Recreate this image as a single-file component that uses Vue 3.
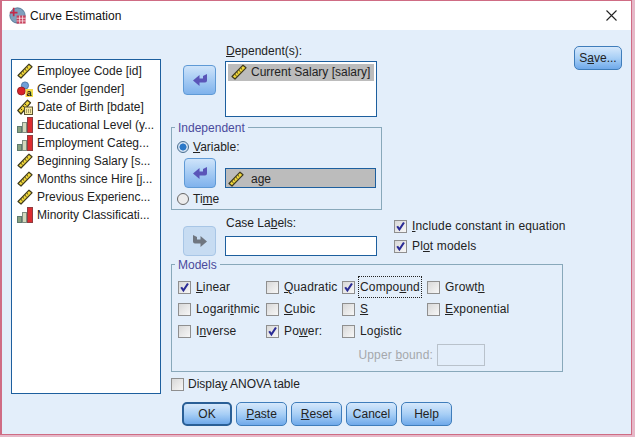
<script setup>
const variables = [
  { icon: 'ruler', label: 'Employee Code [id]' },
  { icon: 'nominal', label: 'Gender [gender]' },
  { icon: 'date', label: 'Date of Birth [bdate]' },
  { icon: 'bars', label: 'Educational Level (y...' },
  { icon: 'bars', label: 'Employment Categ...' },
  { icon: 'ruler', label: 'Beginning Salary [s...' },
  { icon: 'ruler', label: 'Months since Hire [j...' },
  { icon: 'ruler', label: 'Previous Experienc...' },
  { icon: 'bars', label: 'Minority Classificati...' }
]
const models = [
  { pre: '', u: 'L', post: 'inear', on: true },
  { pre: '', u: 'Q', post: 'uadratic', on: false },
  { pre: 'Compo', u: 'u', post: 'nd', on: true, focus: true },
  { pre: 'Growt', u: 'h', post: '', on: false },
  { pre: 'Logari', u: 't', post: 'hmic', on: false },
  { pre: '', u: 'C', post: 'ubic', on: false },
  { pre: '', u: 'S', post: '', on: false },
  { pre: '', u: 'E', post: 'xponential', on: false },
  { pre: 'I', u: 'n', post: 'verse', on: false },
  { pre: 'Po', u: 'w', post: 'er:', on: true },
  { pre: 'Lo', u: 'g', post: 'istic', on: false }
]
</script>

<template>
  <div class="window">
    <svg class="defs" width="0" height="0" aria-hidden="true">
      <defs>
        <symbol id="ruler" viewBox="0 0 16 16">
          <path d="M1 12.5 12 1.2l3 2.6L4 15z" fill="#f2d83a" stroke="#3f3a1c" stroke-width="1.2" stroke-linejoin="round" />
          <path d="M4 10.5l1.6 1.5M6 8.5l1.2 1.1M8 6.4l1.6 1.5M10 4.4l1.2 1.1" stroke="#3f3a1c" stroke-width="1" fill="none" />
        </symbol>
        <symbol id="date" viewBox="0 0 16 16">
          <path d="M0.8 11.5 10.5 1.2l3 2.6L4 15z" fill="#f2d83a" stroke="#3f3a1c" stroke-width="1.2" stroke-linejoin="round" />
          <path d="M3.6 9.6l1.5 1.4M6 7l1.2 1.1M8 5l1.5 1.4" stroke="#3f3a1c" stroke-width="1" fill="none" />
          <rect x="7.5" y="8" width="8" height="7.5" fill="#f4e7a0" stroke="#5a5330" stroke-width="1" />
          <path d="M9 11h1M11 11h1M13 11h1M9 13h1M11 13h1M13 13h1" stroke="#5a5330" stroke-width="1" />
        </symbol>
        <symbol id="bars" viewBox="0 0 16 16">
          <rect x="0.5" y="9.5" width="4" height="6" fill="#86a07e" stroke="#5f7a70" stroke-width="1" />
          <rect x="5.5" y="5.5" width="4" height="10" fill="#d3d8bc" stroke="#7f8c80" stroke-width="1" />
          <rect x="10.5" y="0.5" width="5" height="15" fill="#dc2c30" stroke="#8f3c40" stroke-width="1" />
        </symbol>
        <symbol id="arrow-left" viewBox="0 0 16 14">
          <path d="M15 1v6.5q0 2-2 2H7.5V13L1 7.5 7.5 2v3.5h3.5V3z" />
        </symbol>
        <symbol id="arrow-right" viewBox="0 0 16 14">
          <path d="M1 1v6.5q0 2 2 2h5.5V13L15 7.5 8.5 2v3.5H5V3z" />
        </symbol>
      </defs>
    </svg>

    <header class="titlebar">
      <svg class="app-icon" width="17" height="17" viewBox="0 0 20 20">
        <circle cx="10" cy="10" r="9" fill="#7fa0bd" stroke="#4e7392" />
        <path d="M1 6.5h9M5.5 1v10" stroke="#c42a4a" stroke-width="2" />
        <rect x="9" y="10" width="10.5" height="9.5" fill="#c8415c" />
        <path d="M9 13.2h10.5M9 16.4h10.5M12.5 10v9.5M16 10v9.5" stroke="#fff" stroke-width="0.8" />
      </svg>
      <span class="title">Curve Estimation</span>
      <svg class="close" width="11" height="11" viewBox="0 0 11 11">
        <path d="M.5.5l10 10M10.5.5l-10 10" stroke="#222" stroke-width="1.1" fill="none" />
      </svg>
    </header>

    <div class="body">
      <ul class="var-list">
        <li v-for="v in variables" :key="v.label" class="var-item">
          <svg v-if="v.icon !== 'nominal'" class="var-icon" width="16" height="16"><use :href="'#' + v.icon" /></svg>
          <svg v-else class="var-icon" width="16" height="16" viewBox="0 0 16 16">
            <circle cx="8" cy="4.5" r="3.6" fill="#6f9fd8" stroke="#3e6a9a" stroke-width="0.8" />
            <circle cx="4.4" cy="10" r="4" fill="#d8232a" stroke="#8a1a20" stroke-width="0.8" />
            <rect x="8.5" y="8" width="7.5" height="8" fill="#f5d94a" />
            <text x="9.6" y="15" class="nominal-a">a</text>
          </svg>
          <span>{{ v.label }}</span>
        </li>
      </ul>

      <div class="main">
        <section class="dep-row">
          <button class="arrow"><svg width="16" height="14"><use href="#arrow-left" /></svg></button>
          <div class="dep-field">
            <label class="field-label"><u>D</u>ependent(s):</label>
            <div class="listbox">
              <div class="selected">
                <svg width="16" height="16"><use href="#ruler" /></svg>
                <span>Current Salary [salary]</span>
              </div>
            </div>
          </div>
          <button class="btn save">S<u>a</u>ve...</button>
        </section>

        <fieldset class="group independent">
          <legend>Independent</legend>
          <div class="radio-row first">
            <span class="radio on"></span>
            <span><u>V</u>ariable:</span>
          </div>
          <div class="ind-row">
            <button class="arrow"><svg width="16" height="14"><use href="#arrow-left" /></svg></button>
            <div class="single">
              <svg width="16" height="16"><use href="#ruler" /></svg>
              <span>age</span>
            </div>
          </div>
          <div class="radio-row time">
            <span class="radio"></span>
            <span>Ti<u>m</u>e</span>
          </div>
        </fieldset>

        <section class="case-row">
          <button class="arrow disabled"><svg width="16" height="14"><use href="#arrow-right" /></svg></button>
          <div class="case-field">
            <label class="field-label">Case La<u>b</u>els:</label>
            <div class="input"></div>
          </div>
          <div class="options">
            <div class="check-row">
              <span class="check on"><svg viewBox="0 0 13 13"><path d="M2.6 6.2 5.2 10 10.6 1.8" /></svg></span>
              <span><u>I</u>nclude constant in equation</span>
            </div>
            <div class="check-row">
              <span class="check on"><svg viewBox="0 0 13 13"><path d="M2.6 6.2 5.2 10 10.6 1.8" /></svg></span>
              <span>Pl<u>o</u>t models</span>
            </div>
          </div>
        </section>

        <fieldset class="group models">
          <legend>Models</legend>
          <div class="model-grid">
            <div v-for="m in models" :key="m.pre + m.u + m.post" class="check-row">
              <span class="check" :class="{ on: m.on }">
                <svg v-if="m.on" viewBox="0 0 13 13"><path d="M2.6 6.2 5.2 10 10.6 1.8" /></svg>
              </span>
              <span :class="{ focus: m.focus }">{{ m.pre }}<u v-if="m.u">{{ m.u }}</u>{{ m.post }}</span>
            </div>
          </div>
          <div class="upper">
            <span>Upper <u>b</u>ound:</span>
            <span class="upper-input"></span>
          </div>
        </fieldset>

        <div class="check-row anova">
          <span class="check"></span>
          <span>Displa<u>y</u> ANOVA table</span>
        </div>

        <footer class="actions">
          <button class="btn ok">OK</button>
          <button class="btn"><u>P</u>aste</button>
          <button class="btn"><u>R</u>eset</button>
          <button class="btn">Cancel</button>
          <button class="btn">Help</button>
        </footer>
      </div>
    </div>
  </div>
</template>

<style>
html, body { margin: 0; padding: 0; background: #e6b8c8; }
</style>

<style scoped>
.window {
  width: 632px;
  height: 435px;
  box-sizing: border-box;
  border: 1px solid #cf6c84;
  border-left-width: 2px;
  background: #e3eefa;
  font: 12px "Liberation Sans", Arial, sans-serif;
  color: #222;
  overflow: hidden;
}
.defs { position: absolute; }
.titlebar {
  height: 29px;
  background: #fff;
  display: flex;
  align-items: center;
  padding: 0 14px 0 7px;
}
.app-icon { margin-right: 4px; }
.title { font-size: 12px; flex: 1; color: #111; }
.body {
  display: flex;
  padding: 29px 0 0 9px;
  align-items: flex-start;
}
.var-list {
  width: 150px;
  height: 335px;
  box-sizing: border-box;
  margin: 0;
  padding: 2px 0 0 5px;
  list-style: none;
  background: #fff;
  border: 1px solid #1d5f9e;
}
.var-item {
  height: 18px;
  display: flex;
  align-items: center;
  gap: 4px;
  white-space: nowrap;
}
.var-icon { flex: none; margin-left: 0; }
.nominal-a { font: bold 9px "Liberation Sans", sans-serif; fill: #111; }
.main {
  margin-left: 10px;
  margin-top: -15px;
  width: 451px;
  display: flex;
  flex-direction: column;
}
.dep-row {
  display: flex;
  align-items: flex-start;
  height: 81px;
  padding-left: 12px;
}
.arrow {
  width: 33px;
  height: 30px;
  padding: 0;
  display: grid;
  place-items: center;
  border: 1px solid #5f9ad6;
  border-radius: 4px;
  background: linear-gradient(#cfe4fa, #a9cdf4 45%, #7fb2ec);
  flex: none;
}
.arrow svg { fill: #5a55b8; display: block; }
.arrow.disabled {
  background: #c7dcf2;
  border-color: #a8c6e6;
}
.arrow.disabled svg { fill: #6f7680; }
.dep-row > .arrow { margin-top: 21px; }
.dep-field {
  margin-left: 9px;
  width: 152px;
}
.field-label { display: block; height: 17px; line-height: 15px; padding-left: 1px; }
.listbox {
  height: 56px;
  box-sizing: border-box;
  background: #fff;
  border: 1px solid #1d5f9e;
  padding: 2px;
}
.selected {
  height: 17px;
  box-sizing: border-box;
  padding: 0 0 1px 3px;
  display: flex;
  align-items: center;
  gap: 4px;
  background: #bcbcbc;
  white-space: nowrap;
}
.save { margin-left: auto; margin-top: 2px; width: 48px; margin-right: 0; }
.btn {
  height: 24px;
  box-sizing: border-box;
  padding: 0;
  font: 12px "Liberation Sans", Arial, sans-serif;
  color: #222;
  border: 1px solid #3f7dbb;
  border-radius: 5px;
  background: linear-gradient(#d6e8fb, #a8cff6 50%, #6fa9ea);
}
.group {
  margin: 0;
  box-sizing: border-box;
  border: 1px solid #88a8ba;
  position: relative;
}
.group legend {
  color: #4a4a9c;
  padding: 2px 3px 0;
  margin-left: 0;
  line-height: 14px;
}
.independent {
  width: 211px;
  height: 91px;
  margin-top: -6px;
  padding: 0 0 0 5px;
}
.independent legend { margin-left: -2px; }
.models legend { margin-left: -3px; }
.radio-row {
  display: flex;
  align-items: center;
  gap: 4px;
  height: 15px;
}
.radio-row.first { margin-top: 4px; }
.radio {
  width: 12px;
  height: 12px;
  box-sizing: border-box;
  border-radius: 50%;
  border: 1px solid #666;
  background: #ececec;
  flex: none;
}
.radio.on {
  background: radial-gradient(circle, #2a78c8 0 3.2px, #cfe0f2 3.8px);
  border-color: #4a6f90;
}
.ind-row {
  display: flex;
  align-items: flex-end;
  margin-left: 7px;
  gap: 9px;
  height: 30px;
  margin-top: 4px;
}
.ind-row .arrow { width: 32px; }
.single {
  width: 151px;
  height: 20px;
  box-sizing: border-box;
  border: 1px solid #1d5f9e;
  background: #bcbcbc;
  display: flex;
  align-items: center;
  gap: 7px;
  padding: 1px 0 0 2px;
}
.radio-row.time { margin-top: 3px; }
.case-row {
  display: flex;
  align-items: flex-start;
  padding-left: 12px;
  height: 40px;
  margin-top: 6px;
}
.case-row > .arrow { margin-top: 10px; }
.case-field { margin-left: 9px; width: 152px; }
.case-field .field-label { height: 20px; }
.input {
  height: 20px;
  box-sizing: border-box;
  background: #fff;
  border: 1px solid #1d5f9e;
}
.options {
  margin-left: 17px;
  display: flex;
  flex-direction: column;
  gap: 6px;
  margin-top: 3px;
}
.check-row {
  display: flex;
  align-items: center;
  gap: 5px;
  height: 14px;
  white-space: nowrap;
  letter-spacing: 0.15px;
}
.check {
  width: 13px;
  height: 13px;
  box-sizing: border-box;
  border: 1px solid #8f8f8f;
  background: linear-gradient(135deg, #d8d8d8, #f7f7f7);
  flex: none;
}
.check svg { display: block; width: 100%; height: 100%; overflow: visible; }
.check path { fill: none; stroke: #2a2c96; stroke-width: 2.5; }
.focus {
  outline: 1px dotted #222;
  padding: 3px 1px;
  margin: 0 -1px;
}
.models {
  width: 392px;
  height: 116px;
  padding: 0 0 0 6px;
}
.model-grid {
  display: grid;
  grid-template-columns: 88px 76px 85px 1fr;
  row-gap: 8px;
  margin-top: 8px;
}
.upper {
  display: flex;
  align-items: center;
  justify-content: flex-end;
  gap: 4px;
  color: #a5a8ac;
  margin: 6px 77px 0 0;
  letter-spacing: 0.15px;
}
.upper-input {
  width: 48px;
  height: 22px;
  box-sizing: border-box;
  border: 1px solid #b9c2cb;
  background: #e3eefa;
}
.anova { margin-top: 5px; gap: 4px; letter-spacing: 0; }
.actions {
  display: flex;
  gap: 4px;
  margin: 11px 0 0 11px;
}
.actions .btn { width: 51px; }
.actions .btn.ok { width: 50px; border: 2px solid #2a5f96; }
</style>
